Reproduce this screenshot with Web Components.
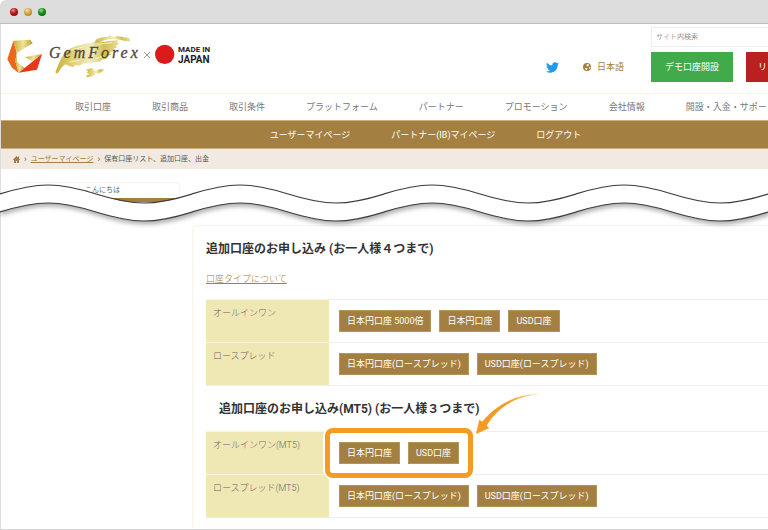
<!DOCTYPE html>
<html lang="ja">
<head>
<meta charset="utf-8">
<meta name="viewport" content="width=device-width, initial-scale=1">
<title>GemForex</title>
<style>
    :root {
        --gold: #a37f41;
        --gold-light: #cbb07c;
        --line: #eeeeee;
        --cream: #fbf3e9;
    }
    body {
        margin: 0;
        background: #fff;
        color: #666;
        font-family: Roboto, "Noto Sans CJK JP", sans-serif;
        font-size: 9px;
        line-height: 14px;
        font-weight: 300;
        overflow: hidden;
    }
</style>
</head>
<body>
<browser-window>
    <site-header></site-header>
    <site-nav></site-nav>
    <bread-crumb>保有口座リスト、追加口座、出金</bread-crumb>
    <side-greeting>こんにちは</side-greeting>
    <account-panel>
        <account-title>追加口座のお申し込み (お一人様４つまで)</account-title>
        <account-link>口座タイプについて</account-link>
        <account-table kind="mt4"></account-table>
        <account-title indent>追加口座のお申し込み(MT5) (お一人様３つまで)</account-title>
        <account-table kind="mt5"></account-table>
    </account-panel>
</browser-window>

<script>
class BrowserWindow extends HTMLElement {
    constructor() {
        super();
        this.attachShadow({ mode: 'open' });
    }

    connectedCallback() {
        this.shadowRoot.innerHTML = `
            <style>
                :host {
                    display: flex;
                    flex-direction: column;
                    min-height: 100vh;
                    box-sizing: border-box;
                    border-bottom: 1px solid #d6d6d6;
                }
                .bar {
                    display: flex;
                    align-items: center;
                    gap: 6px;
                    height: 23px;
                    padding-left: 10px;
                    background: #dddddd;
                    border-bottom: 1px solid #bebebe;
                    border-top-left-radius: 6px;
                }
                .dot {
                    width: 8px;
                    height: 8px;
                    border-radius: 50%;
                }
                .red { background: radial-gradient(circle at 40% 30%, #e88, #b3131b 45%, #7d0a10); }
                .amber { background: radial-gradient(circle at 40% 30%, #f6e2a8, #d0a541 45%, #94701f); }
                .green { background: radial-gradient(circle at 40% 30%, #8d8, #0e8a1a 45%, #06570e); }
                .page {
                    flex: 1;
                    border-left: 1px solid #dddddd;
                }
            </style>
            <div class="bar">
                <span class="dot red"></span>
                <span class="dot amber"></span>
                <span class="dot green"></span>
            </div>
            <div class="page"><slot></slot></div>
        `;
    }
}

class BrandLogo extends HTMLElement {
    constructor() {
        super();
        this.attachShadow({ mode: 'open' });
    }

    connectedCallback() {
        this.shadowRoot.innerHTML = `
            <style>
                :host { display: block; }
                a, svg { display: block; }
                .name {
                    font-family: "Liberation Serif", serif;
                    font-size: 16px;
                    font-style: italic;
                    letter-spacing: 3px;
                    fill: #54463c;
                    stroke: #54463c;
                    stroke-width: .3px;
                }
                .made, .japan {
                    font-family: Roboto, sans-serif;
                    font-weight: 700;
                    fill: #1c1c1c;
                }
                .made { font-size: 8px; }
                .japan { font-size: 10px; }
            </style>
            <a href="#" aria-label="GemForex">
            <svg width="208" height="46" viewBox="0 0 208 46">
                <defs>
                    <linearGradient id="leaf" x1="0" x2="1">
                        <stop offset="0" stop-color="#c9b23d"/>
                        <stop offset=".3" stop-color="#e3d37c"/>
                        <stop offset=".55" stop-color="#f3ecc4"/>
                        <stop offset=".75" stop-color="#d4bf51"/>
                        <stop offset="1" stop-color="#e9dd98"/>
                    </linearGradient>
                    <linearGradient id="facet" x1="0" x2="1">
                        <stop offset="0" stop-color="#c9ad3a"/>
                        <stop offset=".5" stop-color="#efe49a"/>
                        <stop offset="1" stop-color="#bd9d2e"/>
                    </linearGradient>
                </defs>
                <g transform="scale(.33333) translate(-21 -99)">
                    <path fill="url(#facet)" d="M40 122L91 119 98 130 51 158Z"/>
                    <path fill="#ec671c" d="M40 122L50 158 46 184 56 219 36 203 22 178Z"/>
                    <path fill="url(#facet)" d="M50 158L46 184 56 219 74 204 51 186Z"/>
                    <path fill="url(#facet)" d="M75 171L126 162 98 184Z"/>
                    <path fill="#e8381b" d="M126 162L111 209 56 218 84 196Z"/>
                    <path fill="url(#leaf)" d="M166 217L176 192 184 174 196 157 212 145 232 137 262 130 286 127 312 125 334 122 354 121 351 128 360 130 346 138 354 141 338 148 346 151 330 158 334 164 316 170 320 176 300 180 306 184 282 186 276 190 250 190 238 197 226 195 218 202 206 197 196 193 186 201 178 212 172 221Z"/>
                    <path fill="url(#leaf)" d="M282 128L290 118 306 112 324 110 332 104 336 110 352 108 372 112 388 114 391 123 376 124 362 119 346 118 330 117 312 121 298 128Z"/>
                    <path fill="url(#leaf)" d="M258 209L276 204 284 212 304 206 314 209 304 217 288 222 278 228 262 232 258 227 270 222 260 219 264 214Z"/>
                    <path fill="none" stroke="#fff" stroke-width="2" d="M214 149L250 141M292 133L336 128M208 186L238 181M286 178L312 166"/>
                    <path stroke="#9c958c" stroke-width="3" d="M432 156L450 174M450 156L432 174"/>
                    <circle cx="494" cy="163" r="29" fill="#dc1a1c"/>
                </g>
                <text class="name" x="42" y="25">GemForex</text>
                <text class="made" x="171" y="19">MADE IN</text>
                <text class="japan" x="171" y="30">JAPAN</text>
            </svg>
            </a>
        `;
    }
}

class SiteHeader extends HTMLElement {
    constructor() {
        super();
        this.attachShadow({ mode: 'open' });
    }

    connectedCallback() {
        this.shadowRoot.innerHTML = `
            <style>
                :host {
                    display: flex;
                    justify-content: space-between;
                    padding: 3px 0 11px 6px;
                    border-bottom: 1px solid var(--cream);
                }
                brand-logo { padding-top: 6px; }
                .right {
                    display: flex;
                    align-items: flex-end;
                    gap: 27px;
                }
                .social {
                    display: flex;
                    align-items: center;
                    gap: 24px;
                    height: 30px;
                }
                a {
                    display: flex;
                    align-items: center;
                    gap: 6px;
                    color: var(--gold);
                    text-decoration: none;
                    font-weight: 400;
                }
                .tools {
                    display: flex;
                    flex-direction: column;
                    gap: 5px;
                    width: 117px;
                }
                input {
                    box-sizing: border-box;
                    width: 100%;
                    height: 20px;
                    padding: 0 4px;
                    border: 1px solid var(--line);
                    border-right: 0;
                    font: inherit;
                    font-size: 7px;
                    outline: 0;
                }
                input::placeholder { color: #555; opacity: 1; }
                .buttons {
                    display: flex;
                    gap: 13px;
                }
                button {
                    flex: none;
                    height: 30px;
                    padding: 0 14px;
                    border: 0;
                    color: #fff;
                    font: inherit;
                    font-weight: 400;
                }
                .demo { background: #41aa4b; }
                .real {
                    flex: 1;
                    padding: 0 0 0 12px;
                    background: #bb2020;
                    text-align: left;
                }
            </style>
            <brand-logo></brand-logo>
            <div class="right">
                <div class="social">
                    <a href="#" aria-label="Twitter">
                        <svg width="13" height="13" viewBox="0 0 24 24" fill="#1d9bf0"><path d="M24 4.6a10 10 0 0 1-2.8.8 5 5 0 0 0 2.1-2.7 10 10 0 0 1-3.1 1.2 4.9 4.9 0 0 0-8.4 4.5A14 14 0 0 1 1.7 3.2a4.9 4.9 0 0 0 1.5 6.5 5 5 0 0 1-2.2-.6 4.9 4.9 0 0 0 3.9 4.9 5 5 0 0 1-2.2.1 4.9 4.9 0 0 0 4.6 3.4A9.9 9.9 0 0 1 0 19.5a14 14 0 0 0 21.5-12.4A10 10 0 0 0 24 4.6z"/></svg>
                    </a>
                    <a href="#">
                        <svg width="8" height="8" viewBox="0 0 16 16"><circle cx="8" cy="8" r="8" fill="#a37f41"/><path fill="#fff" d="M8 2L12 3 11 6 9 7 7 5zM4 10L8 10 9 12 7 14 4 12zM13 8L15 8 13 12 12 10z"/></svg>
                        日本語
                    </a>
                </div>
                <div class="tools">
                    <input type="search" placeholder="サイト内検索" aria-label="サイト内検索">
                    <div class="buttons">
                        <button class="demo">デモ口座開設</button>
                        <button class="real">リ</button>
                    </div>
                </div>
            </div>
        `;
    }
}

class SiteNav extends HTMLElement {
    constructor() {
        super();
        this.attachShadow({ mode: 'open' });
    }

    connectedCallback() {
        this.shadowRoot.innerHTML = `
            <style>
                :host { display: block; }
                nav {
                    display: flex;
                    align-items: center;
                    gap: 41px;
                    white-space: nowrap;
                }
                a {
                    color: inherit;
                    text-decoration: none;
                }
                .main {
                    height: 26px;
                    padding-left: 74px;
                    color: #777;
                    font-weight: 400;
                }
                .member {
                    justify-content: center;
                    height: 27px;
                    padding-left: 82px;
                    background: var(--gold);
                    border-top: 1px solid var(--gold-light);
                    border-bottom: 1px solid var(--gold-light);
                    color: #fff;
                    font-weight: 400;
                }
            </style>
            <nav class="main">
                <a href="#">取引口座</a>
                <a href="#">取引商品</a>
                <a href="#">取引条件</a>
                <a href="#">プラットフォーム</a>
                <a href="#">パートナー</a>
                <a href="#">プロモーション</a>
                <a href="#">会社情報</a>
                <a href="#">開設・入金・サポー</a>
            </nav>
            <nav class="member">
                <a href="#">ユーザーマイページ</a>
                <a href="#">パートナー(IB)マイページ</a>
                <a href="#">ログアウト</a>
            </nav>
        `;
    }
}

class BreadCrumb extends HTMLElement {
    constructor() {
        super();
        this.attachShadow({ mode: 'open' });
    }

    connectedCallback() {
        this.shadowRoot.innerHTML = `
            <style>
                :host {
                    display: flex;
                    align-items: center;
                    gap: 4px;
                    height: 20px;
                    padding-left: 12px;
                    background: #f2eae1;
                    color: #555;
                    font-size: 7px;
                    font-weight: 400;
                }
                a { color: var(--gold); }
                svg { display: block; }
                .sep { font-size: 9px; }
            </style>
            <a href="#" aria-label="ホーム">
                <svg width="7" height="7" viewBox="0 0 14 14" fill="#a37f41"><path d="M7 0L0 7 1 8 2 8V14H6V10H8V14H12V8H13L14 7 12 5V1H10V3z"/></svg>
            </a>
            <span class="sep">›</span>
            <a href="#">ユーザーマイページ</a>
            <span class="sep">›</span>
            <span><slot></slot></span>
        `;
    }
}

// Wavy strip that hides the skipped part of the page
class WaveBreak extends HTMLElement {
    constructor() {
        super();
        this.attachShadow({ mode: 'open' });
    }

    connectedCallback() {
        this.shadowRoot.innerHTML = `
            <style>
                :host { display: block; }
                svg {
                    display: block;
                    width: 100%;
                    height: 44px;
                    filter: drop-shadow(1px 3px 2px rgba(0, 0, 0, .3));
                }
            </style>
            <svg aria-hidden="true">
                <defs>
                    <pattern id="wave" width="192" height="44" patternUnits="userSpaceOnUse">
                        <path fill="#fff" d="M0 10C16 5 31 1 48 1S80 5 96 10 127 19 144 19 176 15 192 10V28C176 33 161 37 144 37S112 33 96 28 65 19 48 19 16 23 0 28Z"/>
                        <path fill="none" stroke="#3c3a3a" stroke-width="1.200" d="M-1 10.300L0 10C16 5 31 1 48 1S80 5 96 10 127 19 144 19 176 15 192 10L193 9.700M-1 28.300L0 28C16 23 31 19 48 19S80 23 96 28 127 37 144 37 176 33 192 28L193 27.700"/>
                    </pattern>
                </defs>
                <rect width="100%" height="44" fill="url(#wave)"/>
            </svg>
        `;
    }
}

class SideGreeting extends HTMLElement {
    constructor() {
        super();
        this.attachShadow({ mode: 'open' });
    }

    connectedCallback() {
        this.shadowRoot.innerHTML = `
            <style>
                :host {
                    display: block;
                    position: relative;
                    height: 43px;
                    padding: 13px 0 0 12px;
                }
                .card {
                    width: 167px;
                    border: 1px solid var(--cream);
                    border-bottom: 4px solid var(--gold);
                    border-radius: 5px 5px 0 0;
                    padding-left: 71px;
                    box-sizing: border-box;
                    font-size: 7px;
                    line-height: 15px;
                    font-weight: 400;
                }
                wave-break {
                    position: absolute;
                    left: -1px;
                    right: 0;
                    top: 15px;
                    z-index: 1;
                }
            </style>
            <div class="card"><slot></slot></div>
            <wave-break></wave-break>
        `;
    }
}

class AccountPanel extends HTMLElement {
    constructor() {
        super();
        this.attachShadow({ mode: 'open' });
    }

    connectedCallback() {
        this.shadowRoot.innerHTML = `
            <style>
                :host {
                    display: block;
                    margin-left: 191px;
                    padding: 14px 0 10px 13px;
                    border: 1px solid var(--cream);
                    border-width: 1px 0 0 1px;
                    border-radius: 6px 0 0 0;
                }
            </style>
            <slot></slot>
        `;
    }
}

class AccountTitle extends HTMLElement {
    constructor() {
        super();
        this.attachShadow({ mode: 'open' });
    }

    connectedCallback() {
        this.shadowRoot.innerHTML = `
            <style>
                :host { display: block; }
                :host([indent]) { padding: 14px 0 13px 13px; }
                h2 {
                    margin: 0;
                    color: #333;
                    font-size: 12px;
                    line-height: 18px;
                    font-weight: 700;
                }
            </style>
            <h2><slot></slot></h2>
        `;
    }
}

class AccountLink extends HTMLElement {
    constructor() {
        super();
        this.attachShadow({ mode: 'open' });
    }

    connectedCallback() {
        this.shadowRoot.innerHTML = `
            <style>
                :host {
                    display: block;
                    padding: 14px 0 13px;
                }
                a { color: var(--gold); }
            </style>
            <a href="#"><slot></slot></a>
        `;
    }
}

const ACCOUNTS = {
    mt4: [
        { label: 'オールインワン', buttons: ['日本円口座 5000倍', '日本円口座', 'USD口座'] },
        { label: 'ロースプレッド', buttons: ['日本円口座(ロースプレッド)', 'USD口座(ロースプレッド)'] }
    ],
    mt5: [
        { label: 'オールインワン(MT5)', buttons: ['日本円口座', 'USD口座'], marked: true },
        { label: 'ロースプレッド(MT5)', buttons: ['日本円口座(ロースプレッド)', 'USD口座(ロースプレッド)'] }
    ]
};

class AccountTable extends HTMLElement {
    constructor() {
        super();
        this.attachShadow({ mode: 'open' });
    }

    connectedCallback() {
        this.render();
    }

    render() {
        const rows = ACCOUNTS[this.getAttribute('kind')].map(row => `
            <tr>
                <th scope="row">${row.label}</th>
                <td>
                    <div class="group">
                        ${row.buttons.map(text => `<button>${text}</button>`).join('')}
                        ${row.marked ? '<mark-frame></mark-frame>' : ''}
                    </div>
                </td>
            </tr>
        `).join('');

        this.shadowRoot.innerHTML = `
            <style>
                :host { display: block; }
                table {
                    width: 100%;
                    border-collapse: separate;
                    border-spacing: 0;
                    border-bottom: 1px solid var(--line);
                }
                th, td {
                    padding: 0;
                    border-top: 1px solid var(--line);
                    vertical-align: top;
                    text-align: left;
                }
                th {
                    box-sizing: border-box;
                    width: 123px;
                    padding: 6px 7px;
                    background: #f0e8b4;
                    border-color: #faf6dc;
                    font-weight: 300;
                }
                td { padding: 10px; }
                .group {
                    position: relative;
                    display: inline-flex;
                    gap: 8px;
                    vertical-align: top;
                }
                button {
                    height: 22px;
                    padding: 0 7px;
                    border: 1px solid #b6955c;
                    background: #a37f41;
                    color: #fff;
                    font: inherit;
                    font-weight: 400;
                    white-space: nowrap;
                }
            </style>
            <table><tbody>${rows}</tbody></table>
        `;
    }
}

class MarkFrame extends HTMLElement {
    constructor() {
        super();
        this.attachShadow({ mode: 'open' });
    }

    connectedCallback() {
        this.shadowRoot.innerHTML = `
            <style>
                :host {
                    position: absolute;
                    inset: -14px;
                    border: 5px solid #f59a22;
                    border-radius: 8px;
                    box-shadow: 0 0 0 2px #fff;
                    pointer-events: none;
                }
                svg {
                    position: absolute;
                    left: 100%;
                    bottom: 100%;
                    margin: 0 0 -2px 8px;
                }
            </style>
            <svg width="66" height="42" viewBox="0 0 198 126" aria-hidden="true">
                <defs>
                    <linearGradient id="fade" x1="0" x2="1">
                        <stop offset=".5" stop-color="#f59a22"/>
                        <stop offset="1" stop-color="#f59a22" stop-opacity=".2"/>
                    </linearGradient>
                </defs>
                <path fill="url(#fade)" d="M192 3C130 0 62 32 19 86L10 80 0 123 40 105 32 98C66 42 118 10 192 4Z"/>
            </svg>
        `;
    }
}

customElements.define('brand-logo', BrandLogo);
customElements.define('wave-break', WaveBreak);
customElements.define('mark-frame', MarkFrame);
customElements.define('browser-window', BrowserWindow);
customElements.define('site-header', SiteHeader);
customElements.define('site-nav', SiteNav);
customElements.define('bread-crumb', BreadCrumb);
customElements.define('side-greeting', SideGreeting);
customElements.define('account-panel', AccountPanel);
customElements.define('account-title', AccountTitle);
customElements.define('account-link', AccountLink);
customElements.define('account-table', AccountTable);
</script>
</body>
</html>
